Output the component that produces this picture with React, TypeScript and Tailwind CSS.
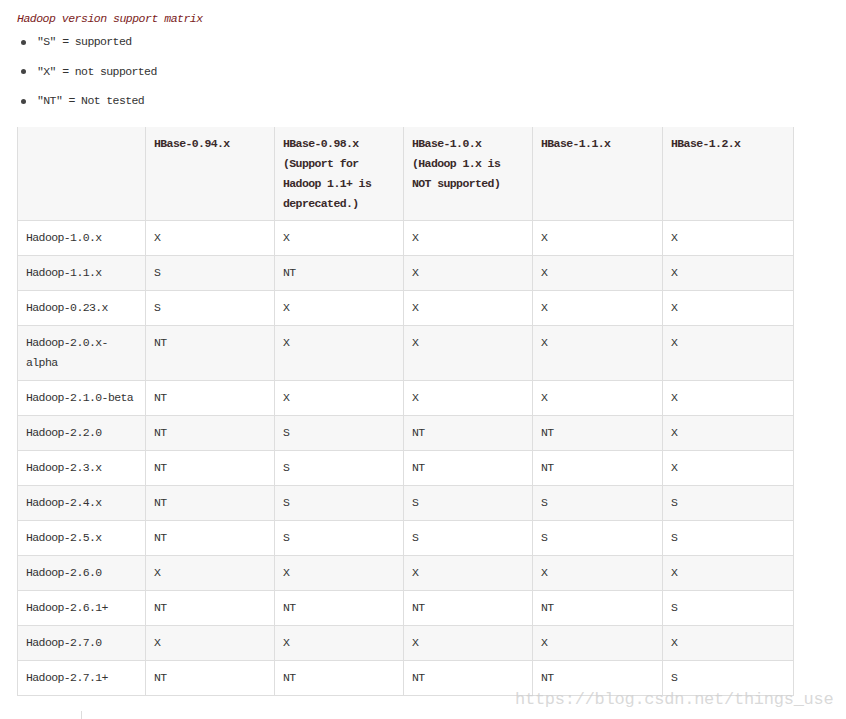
import React from 'react';

const mono = { fontFamily: '"Liberation Mono", "DejaVu Sans Mono", monospace' };

const headers: React.ReactNode[] = [
  '',
  'HBase-0.94.x',
  <>HBase-0.98.x<br />(Support for<br />Hadoop 1.1+ is<br />deprecated.)</>,
  <>HBase-1.0.x<br />(Hadoop 1.x is<br />NOT supported)</>,
  'HBase-1.1.x',
  'HBase-1.2.x',
];

const rows: [React.ReactNode, string, string, string, string, string][] = [
  ['Hadoop-1.0.x', 'X', 'X', 'X', 'X', 'X'],
  ['Hadoop-1.1.x', 'S', 'NT', 'X', 'X', 'X'],
  ['Hadoop-0.23.x', 'S', 'X', 'X', 'X', 'X'],
  [<>Hadoop-2.0.x-<br />alpha</>, 'NT', 'X', 'X', 'X', 'X'],
  ['Hadoop-2.1.0-beta', 'NT', 'X', 'X', 'X', 'X'],
  ['Hadoop-2.2.0', 'NT', 'S', 'NT', 'NT', 'X'],
  ['Hadoop-2.3.x', 'NT', 'S', 'NT', 'NT', 'X'],
  ['Hadoop-2.4.x', 'NT', 'S', 'S', 'S', 'S'],
  ['Hadoop-2.5.x', 'NT', 'S', 'S', 'S', 'S'],
  ['Hadoop-2.6.0', 'X', 'X', 'X', 'X', 'X'],
  ['Hadoop-2.6.1+', 'NT', 'NT', 'NT', 'NT', 'S'],
  ['Hadoop-2.7.0', 'X', 'X', 'X', 'X', 'X'],
  ['Hadoop-2.7.1+', 'NT', 'NT', 'NT', 'NT', 'S'],
];

const legend = ['″S″ = supported', '″X″ = not supported', '″NT″ = Not tested'];

export default function App() {
  return (
    <div className="relative w-[846px] h-[719px] overflow-hidden bg-white text-[#333]" style={mono}>
      <div className="pl-[17px] pt-[9px]">
        {/* titulo */}
        <p className="text-[11.5px] leading-[20px] italic text-[#7b1b1b] tracking-[-0.5px]">
          Hadoop version support matrix
        </p>

        <ul className="mt-[3px] flex flex-col gap-[9.5px]">
          {legend.map((t) => (
            <li key={t} className="flex items-center text-[11.5px] leading-[20px] tracking-[-0.6px] text-[#333]">
              <span className="ml-[4px] mr-[11px] w-[5px] h-[5px] rounded-full bg-[#444]" />
              {t}
            </li>
          ))}
        </ul>

        {/* matriz */}
        <table className="mt-[16px] w-[776px] table-fixed border-collapse text-[11.5px] leading-[20px] tracking-[-0.6px]">
          <colgroup>
            <col className="w-[128px]" />
            <col className="w-[129px]" />
            <col className="w-[129px]" />
            <col className="w-[129px]" />
            <col className="w-[130px]" />
            <col className="w-[131px]" />
          </colgroup>
          <thead>
            <tr className="bg-[#f7f7f7]">
              {headers.map((h, i) => (
                <th
                  key={i}
                  className="border border-[#dedede] border-t-0 px-[8px] pt-[7px] pb-[5px] h-[93px] align-top text-left font-bold text-[#3a2a2a]"
                >
                  {h}
                </th>
              ))}
            </tr>
          </thead>
          <tbody>
            {rows.map((r, ri) => (
              <tr key={ri} className={ri % 2 === 1 ? 'bg-[#f7f7f7]' : 'bg-white'}>
                {r.map((c, ci) => (
                  <td key={ci} className="border border-[#dedede] px-[8px] py-[7px] align-top text-[#333]">
                    {c}
                  </td>
                ))}
              </tr>
            ))}
          </tbody>
        </table>
      </div>

      {/* marca d'agua */}
      <div className="absolute left-[515px] top-[688px] text-[17px] leading-[24px] text-[#cfcfcf]/80 tracking-[-0.25px] pointer-events-none">
        https://blog.csdn.net/things_use
      </div>
      <div className="absolute left-[81px] top-[711px] w-px h-[9px] bg-[#dcdcdc]" />
    </div>
  );
}
